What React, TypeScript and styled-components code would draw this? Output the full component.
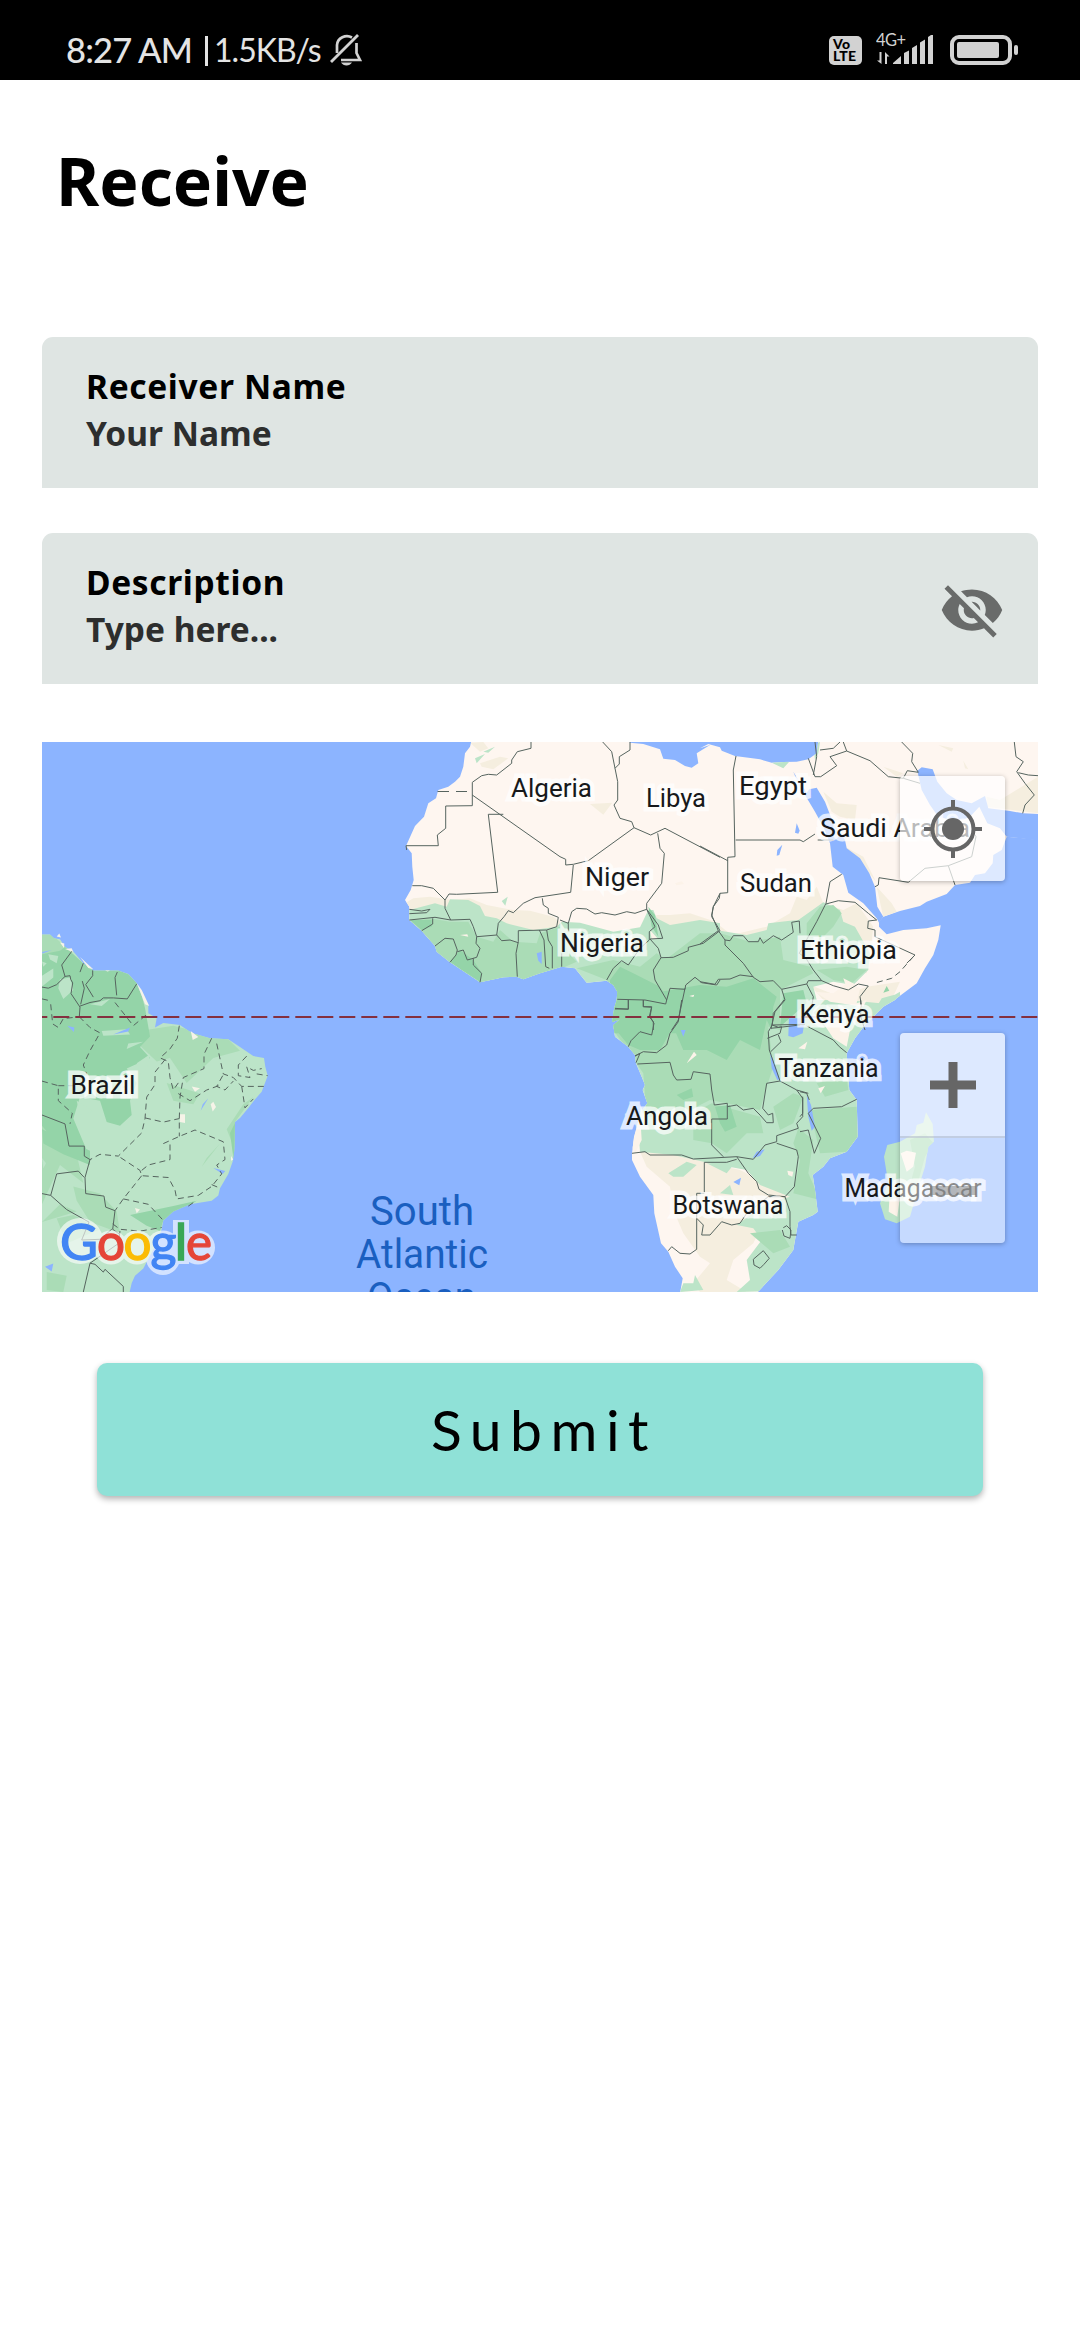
import React from 'react';
import styled, { createGlobalStyle } from 'styled-components';
import { MdVisibilityOff } from 'react-icons/md';

const GlobalStyle = createGlobalStyle`
  * { box-sizing: border-box; }
  body { margin: 0; background: #fff; }
`;

const Screen = styled.div`
  min-height: 2340px;
  background: #fff;
  color: #000;
  font-family: 'Noto Sans', 'Open Sans', sans-serif;
  display: flex;
  flex-direction: column;
`;

/* ---------- status bar ---------- */

const StatusBar = styled.header`
  height: 80px;
  padding: 20px 62px 0 66px;
  background: #000;
  color: #e4e4e4;
  display: flex;
  justify-content: space-between;
  align-items: center;
  font-family: Lato, sans-serif;
`;

const StatusGroup = styled.div`
  height: 60px;
  display: flex;
  align-items: center;
`;

const Clock = styled.span`
  font-size: 34.5px;
  line-height: 60px;
  letter-spacing: -0.85px;
  font-weight: 500;
`;

const Divider = styled.i`
  width: 3px;
  height: 30px;
  margin: 2px 6px 0 13px;
  background: #e4e4e4;
`;

const Speed = styled.span`
  font-size: 32px;
  line-height: 60px;
  letter-spacing: -1px;
  margin-right: 9px;
`;

const VolteBadge = styled.div`
  width: 33px;
  height: 29px;
  border-radius: 5px;
  background: #d2d2d2;
  color: #000;
  display: flex;
  flex-direction: column;
  align-items: flex-start;
  justify-content: center;
  padding-left: 4px;
  font: 900 14px/12px Lato, sans-serif;
  letter-spacing: 0.2px;
  margin-right: 14px;
`;

const Battery = styled.div`
  width: 62px;
  height: 30px;
  margin-left: 16px;
  padding: 3px;
  border: 4px solid #d2d2d2;
  border-radius: 9px;
`;

const Charge = styled.div`
  width: 42px;
  height: 16px;
  border-radius: 2px;
  background: #d2d2d2;
`;

const BatteryTip = styled.div`
  width: 4px;
  height: 10px;
  margin-left: 2px;
  border-radius: 2px;
  background: #d2d2d2;
`;

const BellOff = () => (
  <svg width="32" height="34" viewBox="0 0 32 34" fill="none" stroke="#d2d2d2" strokeWidth="2.7">
    <path d="M7 20V12A10 9.5 0 0 1 22 4.5M26.5 10V20L30 27H11" />
    <path d="M1 29L28 2" strokeWidth="2.9" />
    <path d="M11 29.5H22Q20 32.5 16.500 32.500Q13 32.500 11 29.500Z" fill="#d2d2d2" stroke="none" />
  </svg>
);

const Signal = () => (
  <svg width="58" height="34" viewBox="0 0 58 34" fill="#d2d2d2">
    <text x="0" y="13" fontFamily="Lato, sans-serif" fontSize="16.500" textLength="30">4G+</text>
    <path d="M3.500 19H5.500V31L1 27.500H3.500ZM9 31V19L13.500 23.500H11V31Z" />
    <path d="M17 31V30L25 23V31ZM28 31V20L33 17.500V31ZM36 31V15L41 12V31ZM44 31V9.500L49 6.500V31ZM52 31V4L55 2H57V31Z" />
  </svg>
);

/* ---------- form ---------- */

const Content = styled.main`
  padding: 0 42px;
  display: flex;
  flex-direction: column;
`;

const Title = styled.h1`
  margin: 56px 0 113px 14px;
  font-size: 66px;
  line-height: 88px;
  font-weight: 700;
`;

const Field = styled.label`
  height: 151px;
  margin-bottom: 45px;
  padding: 26px 33px 0 44px;
  border-radius: 11px 11px 0 0;
  background: #dfe5e3;
  display: flex;
  justify-content: space-between;
`;

const FieldText = styled.div`
  display: flex;
  flex-direction: column;
  font-size: 33.5px;
  line-height: 47px;
  font-weight: 700;
`;

const FieldLabel = styled.span`
  letter-spacing: 0.65px;
`;

const Placeholder = styled.span`
  color: #2d2e2e;
`;

const EyeIcon = styled(MdVisibilityOff)`
  width: 66px;
  height: 66px;
  margin-top: 18px;
  color: #696b6a;
`;

const SubmitButton = styled.button`
  height: 133px;
  margin: 71px 55px 0;
  padding: 0 0 1px 8px;
  border: 0;
  border-radius: 10px;
  background: #8fe1d7;
  box-shadow: 0 3px 6px rgba(0, 0, 0, 0.3);
  color: #000;
  font: 400 57px/66px Lato, sans-serif;
  letter-spacing: 8.5px;
`;

/* ---------- map ---------- */

const MapFrame = styled.section`
  position: relative;
  height: 550px;
  margin-top: 13px;
  overflow: hidden;
  background: #8cb4ff;
`;

const MapDrawing = styled.svg`
  display: block;
  width: 996px;
  height: 550px;
`;

const MapControls = styled.div`
  position: absolute;
  inset: 0;
  padding: 34px 33px 49px;
  display: flex;
  flex-direction: column;
  align-items: flex-end;
  justify-content: space-between;
`;

const ControlStack = styled.div`
  border-radius: 4px;
  overflow: hidden;
  box-shadow: 0 1px 5px rgba(0, 0, 0, 0.28);
`;

const ControlButton = styled.div<{ $alpha: number; $line?: boolean }>`
  width: 105px;
  height: 105px;
  display: grid;
  place-items: center;
  background: rgba(255, 255, 255, ${(p) => p.$alpha});
  border-bottom: ${(p) => (p.$line ? '2px solid rgba(160,170,190,.45)' : '0')};
`;

/* Each tile keeps its own origin and resolution; points are projected to map pixels. */
const tile = (ox: number, oy: number, sy = 3) => (points: string) =>
  points
    .trim()
    .split(/\s+/)
    .map((p) => {
      const [x, y] = p.split(',').map(Number);
      return `${(ox + x / 3).toFixed(1)},${(oy + y / sy).toFixed(1)}`;
    })
    .join(' ');

const SA = tile(40, 740, 2.8);
const NW = tile(380, 740);
const NE = tile(700, 740);
const SW = tile(560, 1000);
const SE = tile(800, 1000);

type Project = (points: string) => string;
const area = (...parts: string[]) => `M${parts.join(' ')}Z`;
const areas = (t: Project, list: string[]) => list.map((l) => `M${t(l)}Z`).join('');
const lines = (t: Project, list: string[]) => list.map((l) => `M${t(l)}`).join('');

const southAmerica = area(
  SA(
    '0,545 30,545 42,555 60,558 75,580 100,592 130,625 160,645 235,645 265,655 290,680 305,715 325,745 325,765 350,778 345,805 370,792 420,798 455,820 510,835 565,838 600,860 640,885 672,890 676,915 683,940 665,985 640,1012 625,1030 600,1058 585,1070 583,1150 578,1180 565,1215 540,1255 535,1275 515,1290 450,1300 400,1320 370,1345 365,1370 355,1400 310,1480 285,1500 275,1520 268,1550 0,1550',
  ),
);

const africa = area(
  NW('275,0 270,20 255,40 250,80 240,110 225,125 205,140 175,150 168,175 145,190 132,230 105,258 78,318 95,340 97,380 101,420 92,450 75,480 88,500 88,540 125,572 165,618 170,635 208,665 245,690 300,727 370,712 410,710 430,718 480,700 545,680 585,685 620,728 680,722 700,735 712,755 710,780 703,803 697,840'),
  SW('157,66 180,58 160,76 165,110 205,140 225,165 228,190 245,230 255,255 248,270 262,310 240,340 232,375 222,410 216,460 216,480 240,530 280,585 283,640 303,730 325,755 345,800 368,835 360,880 590,880 655,810 700,750 705,720 715,665'),
  SE('40,645 53,635 45,570 38,525 70,500 90,475 140,455 173,410 170,300 148,270 145,230 140,160 165,115 195,75 250,20 285,0'),
  NE('590,775 650,730 675,685 700,645 715,600 722,556 680,565 610,570 560,583 537,560 537,545 550,530 600,513 660,498 680,485 740,462 765,435 810,428 825,405 855,400 878,370 880,345 905,330 920,290 1020,300 1020,0 355,0 350,40 325,58 290,65 250,66 215,68 180,58 105,48 65,32 60,22 25,12 0,25'),
  NW('990,15 950,40 955,70 935,83 915,78 885,60 850,56 840,28 790,12 750,8 745,0'),
);

const madagascar = area(
  SE('378,337 398,372 402,425 385,440 375,500 350,580 330,650 290,670 255,658 240,610 265,550 252,470 262,435 300,425 345,400 350,375 370,368'),
);

const seas =
  areas(NE, [
    '350,143 328,148 315,165 345,215 372,265 390,310 398,380 430,405 445,458 490,490 530,535 537,548 550,530 532,500 525,440 508,400 480,355 440,325 435,300 400,250 375,185',
    '652,92 665,82 698,88 712,125 740,160 770,180 815,190 855,168 865,205 930,213 970,220 1020,222 1020,302 920,290 900,265 862,250 838,200 815,225 790,240 745,238 715,230 690,195 665,150',
    '280,95 290,112 315,150 320,165 300,145',
    '290,250 299,272 295,281 285,278',
    '247,314 238,345 230,347 232,330',
    '270,838 300,838 300,870 270,870',
  ]) +
  areas(SW, [
    '687,55 735,55 728,100 700,112 685,108',
    '630,155 642,185 660,238 652,240 635,205',
    '614,448 600,468 578,474 590,455',
    '543,533 538,556 520,546',
    '362,90 377,90 370,110',
  ]) +
  areas(SE, ['20,285 33,315 45,380 35,392 25,350']) +
  areas(NW, ['470,640 485,635 485,672 475,662']) +
  areas(SA, ['505,1003 482,1038 488,1020', '6,594 35,588 8,598', '82,800 103,805 102,818', '270,805 220,825 265,816', '520,1198 556,1207 548,1215', '15,1475 40,1466 35,1488']);

const scrub =
  areas(NW, [
    '75,490 100,475 150,470 215,480 270,475 320,495 400,510 450,512 520,530 545,550 620,555 700,580 780,570 815,545 830,525 870,525 930,520 1020,550 1020,600 75,600',
    '630,192 697,188 670,224',
    '300,70 360,50 385,55 340,88 305,80',
    '270,8 310,6 325,25 300,35',
  ]) +
  areas(NE, [
    '0,545 50,550 95,585 200,560 270,520 290,470 320,480 350,440 370,490 430,510 470,490 520,560 510,650 500,700 0,660',
    '370,155 410,190 470,195 465,240 420,230 395,215',
    '530,440 575,490 590,515 550,532',
    '435,320 490,350 528,425 500,390',
    '860,170 900,180 1014,110 1014,220 860,200',
    '550,80 610,100 590,110',
    '715,15 760,25 755,35',
    '790,62 805,88 795,85',
    '330,735 420,770 500,740 600,725 570,790 480,800 370,780',
  ]) +
  areas(SW, [
    '240,455 330,460 450,490 540,510 600,540 690,590 600,690 580,730 520,780 500,840 560,876 420,876 400,850 450,790 420,770 370,700 340,630 330,560 260,500',
  ]);

const lightGreen =
  areas(NW, [
    '80,512 165,490 200,500 210,478 265,480 300,498 315,528 350,535 380,550 460,570 530,560 545,545 600,548 700,575 780,562 805,510 820,510 830,535 870,555 960,540 1020,550 1020,880 60,880',
    '365,483 383,470 376,497',
    '285,55 315,42 290,70',
    '310,35 345,20 325,38',
  ]) +
  area(
    NE('0,550 50,548 60,572 140,585 200,570 205,550 270,542 295,540 330,515 370,487 420,510 430,545 465,560 510,640 505,690 460,735 400,725 340,740 350,780 440,780 540,790 600,755 600,830'),
    SE('140,160 200,300 200,700 0,870'),
    SW('530,876 570,840 560,780 605,720 580,685 530,675 620,610 690,590 600,555 560,510 450,490 340,465 240,455 235,390 100,100 150,-100'),
  ) +
  areas(NE, ['530,800 545,775 600,760 560,820', '215,68 230,52 280,52 250,85', '340,12 360,6 355,40 345,60']) +
  areas(SW, ['325,520 380,485 410,495 370,530 340,530', '440,490 520,495 500,520', '360,876 370,850 400,850 405,825 430,870', '510,555 480,580 520,585']);

const midGreen =
  areas(NW, [
    '90,545 150,535 210,545 265,545 290,590 340,605 360,570 400,605 470,610 480,580 540,560 565,640 590,665 545,685 430,720 300,730 160,640',
    '590,685 700,660 780,680 830,640 850,655 900,650 960,612 1020,580 1020,880 700,880 680,720',
  ]) +
  area(NE('0,580 60,580 150,605 240,590 250,660 330,680 340,700 240,750 240,870'), SW('625,80 640,200 620,260 600,330 500,310 450,300 350,350 260,350 250,220 160,90 160,0')) +
  areas(NE, ['320,550 360,500 400,495 425,520 400,560 360,600 320,590', '350,690 440,680 500,690 455,730 400,720', '400,640 450,610 480,640']) +
  areas(SW, [
    '400,340 455,310 600,350 610,400 560,400 500,460 455,430 400,420',
    '715,385 760,420 745,520 780,600 700,580 720,480 700,430',
    '640,320 700,280 730,290 700,370 660,390',
    '570,700 660,690 690,740 640,760',
  ]) +
  areas(SE, ['30,330 170,320 173,410 140,455 60,460', '50,250 140,230 145,270 75,290', '330,420 375,400 400,430 375,470 350,560 320,590 345,500']);

const darkGreen =
  areas(NW, ['690,720 720,680 760,700 840,740 860,770 880,750 945,740 1020,740 1020,880 690,880', '210,665 240,630 280,660 305,700 300,725 245,690', '90,540 155,540 155,560 125,570', '805,500 825,525 835,590 815,560']) +
  area(NE('0,735 80,740 160,715 230,770 220,800 215,870'), SW('620,60 600,150 540,120 500,180 440,150 370,150 340,80 300,150 240,150 205,135 160,80 160,0')) +
  areas(SW, ['465,320 510,315 530,380 495,395 480,370', '350,285 395,265 400,290 370,300']) +
  areas(NE, ['250,760 310,750 320,790 240,860', '560,738 568,752 550,758']);

const paleSpots =
  areas(NE, ['345,755 400,760 440,730 480,745 470,790 500,780 490,800 390,785', '430,715 470,735 440,745']) +
  areas(SW, ['682,512 700,515 697,530 685,525', '715,145 742,125 735,148', '380,190 402,155 410,165', '240,340 245,420 225,460 215,440']) +
  areas(SE, ['70,70 110,60 150,90 140,140 100,115', '302,460 320,452 348,458 340,500 320,515', '268,600 300,590 292,650 266,635', '55,265 75,258 62,280']) +
  areas(NW, ['885,430 905,424 912,432 890,436', '928,768 943,764 940,771', '810,570 835,598 815,598', '265,590 240,585 262,583']);

const saMid = areas(SA, [
  '6,545 35,545 90,590 60,600 6,600',
  '400,800 565,838 600,870 520,890 440,960 390,890 350,900 260,820',
  '6,1030 100,1120 130,1240 60,1190 6,1300',
  '100,1250 180,1270 230,1320 240,1380 150,1350 110,1290',
  '585,1070 640,1000 610,1020 560,1090 590,1160',
  '540,1130 485,1195 500,1170',
  '20,1490 80,1500 70,1546 20,1540',
  '380,960 480,990 460,1020 400,1010',
  '100,1330 180,1370 80,1410 50,1340',
  '60,1300 110,1320 6,1350',
]);

const saDark = areas(SA, [
  '6,600 60,590 75,580 100,600 130,625 160,645 235,645 265,655 290,680 305,715 315,750 330,830 300,860 330,890 260,920 290,960 270,1010 275,1050 240,1080 200,1070 180,1010 120,1000 100,1060 150,1170 60,1140 6,1080',
  '270,1330 400,1305 470,1290 450,1302 370,1345 360,1375 320,1360',
  '585,1072 595,1070 583,1190 570,1100',
  '6,1090 150,1150 150,1190 70,1160 10,1130',
]);

const saLight = areas(SA, [
  '60,670 90,665 100,700 70,725 55,695',
  '25,600 55,605 50,625 30,615',
  '6,660 40,640 40,665 6,690',
  '150,740 210,725 185,745',
  '185,815 260,810 270,825 190,828',
  '265,850 310,845 260,865',
  '290,905 330,880 320,920 300,935',
  '110,1010 160,1040 120,1050',
  '6,620 20,625 10,635',
  '6,1170 18,1185 10,1200',
]);

const saWhite = areas(SA, [
  '50,550 58,542 63,553',
  '290,680 305,700 328,745 315,740',
  '120,608 160,642 145,638',
  '75,585 95,583 100,594',
  '452,815 475,832 458,840',
  '512,1020 520,1013 528,1028 518,1040',
  '420,1048 435,1048 435,1072 420,1070',
  '455,970 480,975 465,985',
  '60,567 73,570 72,582',
  '195,645 210,645 203,648',
  '573,1165 580,1175 573,1178',
  '285,1310 300,1315 290,1325',
]);

const borders =
  lines(SA, [
    '6,692 25,695 50,685 75,662 90,660 92,670 98,680 93,710 120,748 118,775',
    '120,745 150,735 180,730 190,722 220,722 262,725 290,683',
    '158,645 158,660 137,685 160,720',
    '130,625 120,650',
    '127,675 133,695 122,740',
    '232,650 225,665 230,715',
    '95,592 65,630 75,662',
    '6,1050 75,1075 87,1137 133,1137 133,1165 150,1175 135,1225 137,1270 192,1277 197,1308 225,1318 218,1370 240,1385',
    '32,1275 50,1215 115,1207 133,1225',
    '6,1270 32,1275 80,1315 147,1350 125,1400 180,1398 215,1370',
    '240,1375 235,1410 150,1465 130,1546',
    '150,1465 165,1468 190,1490 195,1482 250,1530 250,1546',
  ]) +
  lines(NW, [
    '453,6 453,25 412,35 395,60 395,70 350,105 325,103 305,107 277,127 277,197 197,198 197,265 172,285 175,317 78,317 80,330',
    '277,165 540,350 557,358 557,375 580,373 625,362 762,263 755,245 720,235 702,195 713,180 713,125 705,85 695,35 668,6',
    '705,85 718,72 718,50 750,30 750,6',
    '370,223 325,223 353,457 230,463 207,462 195,480 160,445 125,437 97,437',
    '195,480 195,505 212,540',
    '88,540 165,532 212,540 270,538 280,560 290,590 350,585 355,550 372,530 385,512 400,518 430,490 465,473 572,457 580,375',
    '88,508 125,513 150,508 140,518 88,521',
    '487,475 490,495 505,505 505,520 535,532 530,560 500,570 415,572 415,605 408,640 412,710',
    '350,585 365,602 390,600 415,608',
    '158,535 158,552 125,572',
    '165,618 195,595 220,597 232,630 228,645 210,667',
    '232,635 250,630 262,660 290,652 300,625 288,610 290,590',
    '280,655 280,675 305,700 300,727',
    '478,570 492,600 497,680 508,685',
    '500,570 505,600 517,620 517,685',
    '545,640 545,680',
    '540,540 565,550 565,575',
    '565,550 575,515 590,505 620,507 645,522 665,518 705,525 740,515 765,520 800,508 835,555 848,595 810,597 835,625 843,653',
    '762,263 812,285 855,265 1020,352',
    '833,280 840,325 853,340 845,430 800,490 800,508 825,560 808,575 808,600 780,625 745,675 725,662 700,685 680,720',
    '843,653 820,690 825,720 860,780 857,792 795,780 712,778',
    '843,653 880,652 925,632 925,622 970,610 1020,572',
    '1020,572 995,530 1000,500 1020,460',
    '860,780 870,745 915,748 917,735 945,712 965,728 1010,735 1020,720',
    '915,745 895,840 875,870',
    '745,780 745,807 705,807',
    '790,780 790,800 815,800 808,830 820,845 820,870',
  ]) +
  lines(NE, [
    '108,48 100,90 105,350 83,352 83,458 60,460 58,475 40,500 35,525 55,572 0,612',
    '0,318 83,362',
    '107,300 300,300 310,305 345,282',
    '353,300 400,300',
    '325,55 345,110 362,110 410,77 390,50 440,33 430,6',
    '440,33 510,62 565,110 610,115 622,92 655,97 635,65 638,40 605,6',
    '340,105 350,50 345,6',
    '360,30 400,25 420,6',
    '610,115 660,130',
    '943,6 948,50 970,65 950,95 975,130 1003,165 975,195 968,220',
    '955,98 985,105 1014,107',
    '525,440 535,435 537,413 625,427 675,385 745,377 815,350 828,290 815,270',
    '745,377 765,435',
    '55,572 75,600 90,602 100,587 130,587 145,605 175,605 180,593 190,610 220,587 245,600 280,577 275,547 298,543 300,580',
    '75,600 75,615 130,670 160,712 180,725 220,722 245,748 320,732 325,722 365,722 340,690 318,655 298,640 325,590 350,545 378,490 390,425 425,403',
    '0,725 45,733 55,718 90,717 120,705 160,710',
    '378,492 415,482 465,487 505,520 530,540 505,543 503,565 525,570 525,590 645,645 620,670',
    '365,722 400,737 445,750 475,732 505,738 480,770 485,800',
    '245,748 255,780 225,815 213,865 300,855',
    '320,732 340,770 335,800',
  ]) +
  lines(SW, [
    '165,25 205,28 205,0',
    '250,0 250,20 275,22 270,50 282,70 275,105 240,95 213,122 205,140',
    '365,0 355,65 330,100 320,135 290,158 250,155 225,168 240,160 228,188',
    '232,192 330,187 340,225 350,240 393,238 400,215 450,222 455,270 463,315 502,310 502,357 455,357 455,435 490,470',
    '502,320 530,315 550,330 580,325 600,345 620,368 640,368 638,340 625,345 608,325 620,250 660,243 710,270 745,280',
    '672,0 640,40 637,75 625,95 628,150 660,243',
    '637,75 655,82 665,80 660,100 622,115',
    '655,105 663,125 632,155',
    '637,75 735,73',
    '216,460 255,455 270,465 365,465 400,477 530,470 580,478 615,435 650,425 650,407 715,385 710,370 728,350 728,295 710,270',
    '650,430 710,450 715,470 703,560 675,590 625,585 597,568 590,545 565,520 530,470',
    '433,577 433,487 500,487 530,478',
    '433,580 410,580 410,748 390,762 360,760 335,740 325,752',
    '410,655 430,675 425,705 450,705 485,665 515,675 540,670 560,640 625,590 675,590',
    '675,590 690,635 690,680 693,705 710,705',
    '670,683 680,677 693,690 690,715 672,708 667,690',
    '580,778 610,752 628,775 612,793 600,805 582,795 580,778',
  ]) +
  lines(SE, ['20,78 100,120 118,140 140,158', '170,298 125,320 40,325 25,340 62,415 43,460 25,390 0,395', '0,275 20,280 28,300', '0,350 8,340 8,290', '182,0 182,50 195,90']);

const dashedBorders =
  lines(SA, [
    '118,775 150,805 180,820 150,870 130,910 140,935',
    '6,955 55,968 55,1010 97,1045 90,1075',
    '55,968 100,968',
    '225,735 280,800 325,765',
    '32,740 38,795 55,805 70,780 118,775',
    '6,725 30,730',
    '418,800 412,835 390,865 360,890 385,900 390,945 400,980 415,960',
    '375,895 345,930 345,965 320,1000 315,1060 305,1100 235,1165 180,1160 150,1175',
    '515,835 492,880 492,920 430,945 420,1000 418,1060 418,1110',
    '315,1058 370,1070 418,1060',
    '530,850 550,935 580,945 605,970 675,970',
    '548,940 530,970 555,980 580,955',
    '415,990 450,1010 500,980 545,965',
    '620,885 595,910 595,940 630,945 620,915 640,925 665,920',
    '605,970 615,1030 640,1005',
    '370,1130 418,1110 465,1092 550,1125 555,1175 530,1190 545,1215 515,1250 475,1275 410,1285 405,1260 385,1225 305,1220 300,1205 235,1165',
    '305,1205 325,1190 390,1175 390,1130',
    '305,1220 250,1285 225,1318',
    '250,1285 325,1300 370,1345',
    '218,1355 240,1370 300,1375 365,1365',
    '650,935 683,940',
    '515,1245 540,1255',
    '445,1305 465,1292',
  ]) + lines(NE, ['640,650 600,695 575,715 528,728']);

const COUNTRIES: [string, number, number, number][] = [
  ['Algeria', 511, 797, 81],
  ['Libya', 646, 807, 60],
  ['Egypt', 739, 795, 68],
  ['Saudi Arabia', 820, 837, 150],
  ['Niger', 585, 886, 64],
  ['Sudan', 740, 892, 72],
  ['Nigeria', 560, 952, 84],
  ['Ethiopia', 800, 959, 97],
  ['Kenya', 799.5, 1023, 70],
  ['Tanzania', 778.5, 1077, 100],
  ['Brazil', 70.5, 1094, 65],
  ['Angola', 626, 1125, 82],
  ['Madagascar', 844.5, 1197, 137],
  ['Botswana', 672.5, 1214, 111],
];

const OCEAN: [string, number, number, number][] = [
  ['South', 370, 1225, 104],
  ['Atlantic', 356, 1268, 132],
  ['Ocean', 367, 1311, 109],
];

const CountryName = styled.text`
  font: 400 26px Roboto, sans-serif;
  fill: #17191b;
  stroke: rgba(255, 255, 255, 0.72);
  stroke-width: 9px;
  paint-order: stroke;
`;

const OceanName = styled.text`
  font: 400 41px Roboto, sans-serif;
  fill: #1a5fc0;
`;

const Wordmark = styled.text<{ $color: string }>`
  font: 400 50px Lato, sans-serif;
  fill: ${(p) => p.$color};
  stroke: ${(p) => p.$color};
  stroke-width: 1.3px;
`;

const LETTERS: [string, number, string, number][] = [
  ['G', 60, '#4285f4', 38],
  ['o', 97, '#e54538', 28],
  ['o', 123.5, '#fbbc05', 28],
  ['g', 150.5, '#4285f4', 26],
  ['l', 174.5, '#3aa757', 13],
  ['e', 186, '#e54538', 26],
];

const WorldMap = () => (
  <MapDrawing viewBox="42 742 996 550">
    <defs>
      <clipPath id="africa"><path d={africa} /></clipPath>
      <clipPath id="brazil"><path d={southAmerica} /></clipPath>
      <clipPath id="madagascar"><path d={madagascar} /></clipPath>
    </defs>
    <rect x="42" y="742" width="996" height="550" fill="#8cb4ff" />
    <path d={southAmerica} fill="#bce4c8" />
    <g clipPath="url(#brazil)">
      <path d={saMid} fill="#aadcb6" />
      <path d={saDark} fill="#94d4a8" />
      <path d={saLight} fill="#bce4c8" />
    </g>
    <path d={saWhite} fill="#f6f3e8" />
    <path d={africa} fill="#fef6f0" />
    <g clipPath="url(#africa)">
      <path d={scrub} fill="#f5eedf" />
      <path d={lightGreen} fill="#bce4c8" />
      <path d={midGreen} fill="#aadcb6" />
      <path d={darkGreen} fill="#94d4a8" />
      <path d={paleSpots} fill="#fcf3e9" />
    </g>
    <path d={madagascar} fill="#bce4c8" />
    <g clipPath="url(#madagascar)">
      <path d={midGreen} fill="#aadcb6" />
      <path d={paleSpots} fill="#fcf3e9" />
    </g>
    <path d={seas} fill="#8cb4ff" />
    <g fill="none" stroke="#56645f" strokeWidth="1" strokeLinejoin="round">
      <path d={borders} />
      <path d={dashedBorders} strokeDasharray="6 4" />
      <path d="M437.500 791.500H449M456 791.500H467" />
    </g>
    <path d="M31.300 1017H1038" stroke="#84303f" strokeWidth="2" strokeDasharray="16 6" />
    {COUNTRIES.map(([name, x, y, w]) => (
      <CountryName key={name} x={x} y={y} textLength={w} lengthAdjust="spacingAndGlyphs">{name}</CountryName>
    ))}
    {OCEAN.map(([name, x, y, w]) => (
      <OceanName key={name} x={x} y={y} textLength={w} lengthAdjust="spacingAndGlyphs">{name}</OceanName>
    ))}
    <g opacity="0.62" fill="#fff">
      <circle cx="80" cy="1241" r="23" />
      <circle cx="111" cy="1247.500" r="17" />
      <circle cx="137" cy="1247.500" r="17" />
      <circle cx="163" cy="1247.500" r="17" />
      <circle cx="163" cy="1258" r="17" />
      <circle cx="198" cy="1247.500" r="17" />
      <rect x="173" y="1220" width="16" height="44" />
    </g>
    {LETTERS.map(([ch, x, color, w], i) => (
      <Wordmark key={i} x={x} y="1259.500" $color={color} textLength={w} lengthAdjust="spacingAndGlyphs">{ch}</Wordmark>
    ))}
  </MapDrawing>
);

export default function App() {
  return (
    <Screen>
      <GlobalStyle />
      <StatusBar>
        <StatusGroup>
          <Clock>8:27 AM</Clock>
          <Divider />
          <Speed>1.5KB/s</Speed>
          <BellOff />
        </StatusGroup>
        <StatusGroup>
          <VolteBadge>
            <span>Vo</span>
            <span>LTE</span>
          </VolteBadge>
          <Signal />
          <Battery>
            <Charge />
          </Battery>
          <BatteryTip />
        </StatusGroup>
      </StatusBar>
      <Content>
        <Title>Receive</Title>
        <Field>
          <FieldText>
            <FieldLabel>Receiver Name</FieldLabel>
            <Placeholder>Your Name</Placeholder>
          </FieldText>
        </Field>
        <Field>
          <FieldText>
            <FieldLabel>Description</FieldLabel>
            <Placeholder>Type here...</Placeholder>
          </FieldText>
          <EyeIcon />
        </Field>
        <MapFrame>
          <WorldMap />
          <MapControls>
            <ControlStack>
              <ControlButton $alpha={0.7}>
                <svg width="60" height="60" viewBox="0 0 60 60" fill="none" stroke="#666" strokeWidth="4">
                  <circle cx="30" cy="30" r="20.500" />
                  <circle cx="30" cy="30" r="11" fill="#666" stroke="none" />
                  <path d="M30 1V11M30 49V59M1 30H11M49 30H59" />
                </svg>
              </ControlButton>
            </ControlStack>
            <ControlStack>
              <ControlButton $alpha={0.7} $line>
                <svg width="46" height="46" viewBox="0 0 46 46" stroke="#666" strokeWidth="9">
                  <path d="M23 0V46M0 23H46" />
                </svg>
              </ControlButton>
              <ControlButton $alpha={0.5}>
                <svg width="46" height="9" viewBox="0 0 46 9" fill="#777" fillOpacity="0.5">
                  <rect width="46" height="9" />
                </svg>
              </ControlButton>
            </ControlStack>
          </MapControls>
        </MapFrame>
        <SubmitButton>Submit</SubmitButton>
      </Content>
    </Screen>
  );
}
